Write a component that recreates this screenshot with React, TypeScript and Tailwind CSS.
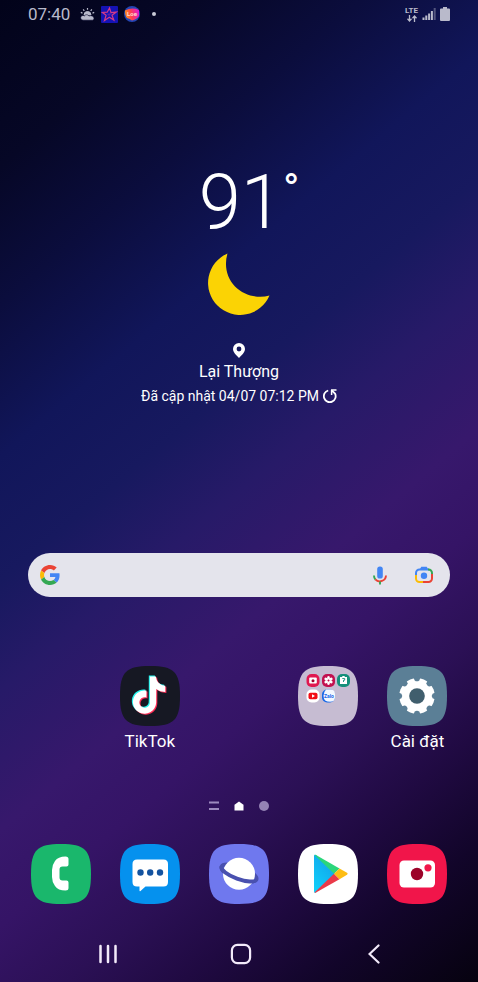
import type { ReactNode } from 'react'

const SQUIRCLE = 'M30 0C54 0 60 6 60 30S54 60 30 60 0 54 0 30 6 0 30 0Z'

const TIKTOK_NOTE =
  'M12.525.02c1.31-.02 2.61-.01 3.91-.02.08 1.53.63 3.09 1.75 4.17 1.12 1.11 2.7 1.62 4.24 1.79v4.03c-1.44-.05-2.89-.35-4.2-.97-.57-.26-1.1-.59-1.62-.93-.01 2.92.01 5.84-.02 8.75-.08 1.4-.54 2.79-1.35 3.94-1.31 1.92-3.58 3.17-5.91 3.21-1.43.08-2.86-.31-4.08-1.03-2.02-1.19-3.44-3.37-3.65-5.71-.02-.5-.03-1-.01-1.49.18-1.9 1.12-3.72 2.58-4.96 1.66-1.44 3.98-2.13 6.15-1.72.02 1.48-.04 2.96-.04 4.44-.99-.32-2.15-.23-3.02.37-.63.41-1.11 1.04-1.36 1.75-.21.51-.15 1.07-.14 1.61.24 1.64 1.82 3.02 3.5 2.87 1.12-.01 2.19-.66 2.77-1.61.19-.33.4-.67.41-1.06.1-1.79.06-3.57.07-5.36.01-4.03-.01-8.05.02-12.07z'

export default function App() {
  return (
    <div className="flex min-h-screen flex-col bg-[linear-gradient(140deg,#02031a_0%,#060726_12%,#0b0d3d_22%,#11165a_33%,#17195f_42%,#271a68_50%,#37186c_60%,#351466_67%,#2b1055_75%,#200a42_82%,#12052a_90%,#06020f_100%)] font-[Roboto,'Noto_Sans',sans-serif] text-white">
      <StatusBar />
      <main className="flex flex-col">
        <Weather />
        <SearchBar />
        <div className="mt-[69px] grid grid-cols-5 px-4">
          <AppButton name="TikTok" column="col-start-2" showLabel>
            <TikTokIcon />
          </AppButton>
          <AppButton name="Thư mục" column="col-start-4">
            <FolderIcon />
          </AppButton>
          <AppButton name="Cài đặt" column="col-start-5" showLabel>
            <SettingsIcon />
          </AppButton>
        </div>
        <PageIndicator />
        <div className="mt-[30px] grid grid-cols-5 px-4">
          <AppButton name="Điện thoại"><PhoneIcon /></AppButton>
          <AppButton name="Tin nhắn"><MessagesIcon /></AppButton>
          <AppButton name="Internet"><InternetIcon /></AppButton>
          <AppButton name="Play Store"><PlayIcon /></AppButton>
          <AppButton name="Máy ảnh"><CameraIcon /></AppButton>
        </div>
      </main>
      <NavBar />
    </div>
  )
}

function StatusBar() {
  return (
    <header className="flex h-7 items-center px-7 text-[#b9bacb]">
      <span className="text-[17px] leading-7">07:40</span>
      <svg className="ml-2.5" width="15" height="14" viewBox="0 0 15 14" fill="none" stroke="currentColor">
        <path d="M7.5 1v1.8M3.2 2.4l1.1 1.4M11.8 2.4l-1.1 1.4M.8 5.4l1.7.7M14.2 5.4l-1.7.7" strokeWidth="1.2" />
        <path d="M4 8a3.5 3.5 0 0 1 7 0z" fill="currentColor" strokeWidth="1" />
        <path d="M3 13.2a2.4 2.4 0 0 1 0-4.8c.6 0 1 .2 1.4.5.8-1.4 3.4-1.8 4.6.1 2-.9 5-.1 5 2.2 0 1.4-1 2-2 2z" fill="currentColor" stroke="#06072a" strokeWidth="0.6" />
      </svg>
      <svg className="ml-1.5" width="17" height="17" viewBox="0 0 17 17">
        <rect width="17" height="17" rx="1" fill="#1513b4" />
        <path d="M8.5 2l1.5 4.7 5.2-.6-4.2 3.1 1.8 4.8-4.5-2.7-4.8 3.2 1.6-5.3-3.6-2.7 4.7-.3z" fill="none" stroke="#d33a86" strokeWidth="1.2" />
        <path d="M6 8l5-1-3 3z" fill="#5b1fb0" />
      </svg>
      <svg className="ml-1.5" width="16" height="16" viewBox="0 0 16 16">
        <defs>
          <linearGradient id="live" x1="0" y1="0.6" x2="1" y2="0.4">
            <stop offset="0" stopColor="#ff9d12" />
            <stop offset="0.45" stopColor="#ff3e50" />
            <stop offset="1" stopColor="#e11bd0" />
          </linearGradient>
        </defs>
        <circle cx="8" cy="8" r="8" fill="#2445b4" />
        <path d="M1 4.5Q8 1 15 4v6Q13 13 8 14.5q-2-2-5-2.5-2-2-2-7.5z" fill="url(#live)" />
        <text x="8" y="10" textAnchor="middle" fontSize="6" fontWeight="700" fill="#ffd9c9">Loe</text>
      </svg>
      <span className="ml-3 size-1 rounded-full bg-[#c9cad6]" />
      <div className="ml-auto flex items-center gap-1">
        <div className="flex flex-col items-center">
          <span className="text-[8px] leading-[8px] font-bold">LTE</span>
          <svg width="10" height="7" viewBox="0 0 10 7" fill="none" stroke="currentColor" strokeWidth="1.3">
            <path d="M2.5 0v6M.5 3.8l2 2.2 2-2.2M7.5 7V1M5.5 3.2l2-2.2 2 2.2" />
          </svg>
        </div>
        <svg width="14" height="14" viewBox="0 0 14 14" fill="currentColor">
          <path d="M.5 10.5h2V13h-2zM3.3 8.5h2V13h-2zM6.1 6.5h2V13h-2zM8.9 4h2v9h-2z" />
          <path d="M11.7 1h2v12h-2z" opacity="0.4" />
        </svg>
        <svg width="10" height="14" viewBox="0 0 10 14" fill="currentColor">
          <path d="M3 0h4v1.5h2q1 0 1 1V13q0 1-1 1H1q-1 0-1-1V2.5q0-1 1-1h2z" />
        </svg>
      </div>
    </header>
  )
}

function Weather() {
  return (
    <section className="flex flex-col items-center pt-[132px]">
      <div className="flex items-start pl-5">
        <span className="text-[76px] leading-[84px] font-light">91</span>
        <span className="text-[44px] leading-[60px]">°</span>
      </div>
      <svg className="mt-2" width="62" height="63" viewBox="0 0 62 63">
        <path d="M19.5 1.5A32 32 0 1 0 61.5 43.5C50 47 36 43.5 27 34.5 18.5 26 16 13 19.5 1.5Z" fill="#fbd304" />
      </svg>
      <svg className="mt-7" width="12" height="15" viewBox="0 0 12 15">
        <path d="M6 0a6 6 0 0 0-6 6c0 3.5 3.8 6.5 6 9 2.2-2.5 6-5.5 6-9a6 6 0 0 0-6-6zm0 3.6a2.4 2.4 0 1 1 0 4.8 2.4 2.4 0 0 1 0-4.8z" fill="#fff" fillRule="evenodd" />
      </svg>
      <p className="mt-0.5 text-base leading-6">Lại Thượng</p>
      <button type="button" className="flex items-center gap-1 text-sm leading-6">
        Đã cập nhật 04/07 07:12 PM
        <svg width="14" height="14" viewBox="0 0 14 14" fill="none" stroke="currentColor" strokeWidth="1.8">
          <path d="M5.2 1.5A5.9 5.9 0 1 0 12 4.5L9 1.6" />
          <path d="M8 1h5.5M8.6 1v5" strokeWidth="1.5" />
        </svg>
      </button>
    </section>
  )
}

function SearchBar() {
  return (
    <form className="mx-7 mt-[145px] flex h-11 items-center rounded-full bg-[#e4e4ec] pr-1 pl-3">
      <svg className="shrink-0" width="20" height="20" viewBox="0 0 48 48">
        <path fill="#EA4335" d="M24 9.5c3.54 0 6.71 1.22 9.21 3.6l6.85-6.85C35.9 2.38 30.47 0 24 0 14.62 0 6.51 5.38 2.56 13.22l7.98 6.19C12.43 13.72 17.74 9.5 24 9.5z" />
        <path fill="#4285F4" d="M46.98 24.55c0-1.57-.15-3.09-.38-4.55H24v9.02h12.94c-.58 2.96-2.26 5.48-4.78 7.18l7.73 6c4.51-4.18 7.09-10.36 7.09-17.65z" />
        <path fill="#FBBC05" d="M10.53 28.59c-.48-1.45-.76-2.99-.76-4.59s.27-3.14.76-4.59l-7.98-6.19C.92 16.46 0 20.12 0 24c0 3.88.92 7.54 2.56 10.78l7.97-6.19z" />
        <path fill="#34A853" d="M24 48c6.48 0 11.93-2.13 15.89-5.81l-7.73-6c-2.15 1.45-4.92 2.3-8.16 2.3-6.26 0-11.57-4.22-13.47-9.91l-7.98 6.19C6.51 42.62 14.62 48 24 48z" />
      </svg>
      <input type="text" aria-label="Tìm kiếm" className="min-w-0 flex-1 bg-transparent px-3 text-base text-gray-800 outline-none" />
      <button type="button" aria-label="Tìm kiếm bằng giọng nói" className="flex size-11 items-center justify-center">
        <svg width="14" height="19" viewBox="0 0 14 19" fill="none" strokeWidth="1.9">
          <rect x="4.2" y="0.5" width="5.6" height="12" rx="2.6" fill="#4285F4" />
          <path d="M1 9.5a6 6 0 0 0 1.5 4.1" stroke="#34A853" />
          <path d="M2.3 13.4a6.2 6.2 0 0 0 10.7-3.9" stroke="#EA4335" />
          <path d="M7 15.6v3" stroke="#34A853" />
        </svg>
      </button>
      <button type="button" aria-label="Tìm kiếm bằng hình ảnh" className="flex size-11 items-center justify-center">
        <svg width="20" height="18" viewBox="0 0 20 18" fill="none" strokeWidth="2">
          <path d="M2 9V7a3.5 3.5 0 0 1 3.5-3.5H15" stroke="#4285F4" />
          <path d="M6 3L7.3.8h5.4L14 3z" fill="#4285F4" />
          <path d="M14 3.5h.5A3.5 3.5 0 0 1 18 7v1.5" stroke="#34A853" />
          <path d="M18 8v4.5a3.5 3.5 0 0 1-3.5 3.5H9" stroke="#EA4335" />
          <path d="M2 9v3.5A3.5 3.5 0 0 0 5.5 16H9" stroke="#FBBC05" />
          <circle cx="10" cy="9.8" r="3.2" fill="#4285F4" />
        </svg>
      </button>
    </form>
  )
}

function AppButton({
  name, column, showLabel, children,
}: {
  name: string; column?: string; showLabel?: boolean; children: ReactNode
}) {
  return (
    <button type="button" aria-label={name} className={`flex flex-col items-center gap-1 ${column ?? ''}`}>
      {children}
      {showLabel && <span className="text-[17px] leading-[22px] whitespace-nowrap">{name}</span>}
    </button>
  )
}

function AppIcon({ color, children }: { color: string; children: ReactNode }) {
  return (
    <svg width="60" height="60" viewBox="0 0 60 60">
      <path d={SQUIRCLE} fill={color} />
      {children}
    </svg>
  )
}

function TikTokIcon() {
  return (
    <AppIcon color="#161823">
      <path d={TIKTOK_NOTE} fill="#25f4ee" transform="translate(9.4 9.5) scale(1.55)" />
      <path d={TIKTOK_NOTE} fill="#fe2c55" transform="translate(11.6 11.5) scale(1.55)" />
      <path d={TIKTOK_NOTE} fill="#fff" transform="translate(10.5 10.5) scale(1.55)" />
    </AppIcon>
  )
}

function FolderIcon() {
  return (
    <AppIcon color="#c6bcd2">
      <rect x="8.5" y="8" width="13" height="13" rx="5" fill="#e01850" />
      <rect x="11.2" y="11.5" width="7.6" height="6" rx="1" fill="#fff" />
      <circle cx="15" cy="14.7" r="1.5" fill="#a0002d" />
      <rect x="24" y="8" width="13" height="13" rx="5" fill="#c2104f" />
      <g fill="#fff">
        {[0, 60, 120, 180, 240, 300].map((a) => (
          <ellipse key={a} cx="30.5" cy="11.9" rx="1.4" ry="2" transform={`rotate(${a} 30.5 14.5)`} />
        ))}
      </g>
      <circle cx="30.5" cy="14.5" r="0.9" fill="#c2104f" />
      <rect x="39" y="8" width="13" height="13" rx="5" fill="#14907a" />
      <path d="M42 11h2l.6-1h1.8l.6 1h2v7h-7z" fill="#fff" />
      <path d="M44.3 12.5h2.4v1.7h-1.2v1.8" fill="none" stroke="#14907a" strokeWidth="0.9" />
      <rect x="8.5" y="23.5" width="13" height="13" rx="5" fill="#fff" />
      <rect x="10.5" y="26.8" width="9" height="6.4" rx="1.8" fill="#f20d16" />
      <path d="M14 28.3l3 1.7-3 1.7z" fill="#fff" />
      <rect x="24" y="23.5" width="13" height="13" rx="5" fill="#1769e8" />
      <path d="M28 23.6h5q4 .4 4 4.6v3q0 4.5-5 4.5-3 0-4.5-1-2-1.7-2-5t2.5-6.1z" fill="#f4f8ff" />
      <text x="31" y="32" textAnchor="middle" fontSize="5" fontWeight="700" fill="#1769e8">Zalo</text>
    </AppIcon>
  )
}

function SettingsIcon() {
  return (
    <AppIcon color="#5b7f96">
      <circle cx="30" cy="30" r="17.8" fill="#fff" />
      {[0, 45, 90, 135, 180, 225, 270, 315].map((a) => (
        <path key={a} d="M26.3 11h7.4L32.3 14.4Q30 16.2 27.7 14.4z" fill="#5b7f96" transform={`rotate(${a} 30 30)`} />
      ))}
      <circle cx="30" cy="30" r="7.8" fill="#405e6d" />
    </AppIcon>
  )
}

function PhoneIcon() {
  return (
    <AppIcon color="#1ab76c">
      <path d="M34.5 12.5q3 0 3 2.5v5.5q0 2-2 2h-4q-3 0-3 3v8q0 3 3 3h4q2 0 2 2V44q0 2.5-3 2.5-7.5 0-10.5-4.5-3-4-3-9v-7q0-5 3-9 3-4.5 10.5-4.5z" fill="#fff" />
    </AppIcon>
  )
}

function MessagesIcon() {
  return (
    <AppIcon color="#0591ee">
      <path d="M17 15.5h26.5q4.5 0 4.5 4.5v18q0 4.5-4.5 4.5H25.5L20.5 47q-1 .7-1-.5v-4H17q-4.5 0-4.5-4.5V20q0-4.5 4.5-4.5z" fill="#fff" />
      <g fill="#1453a0">
        <circle cx="20.5" cy="28.5" r="3.2" />
        <circle cx="30.2" cy="28.5" r="3.2" />
        <circle cx="40" cy="28.5" r="3.2" />
      </g>
    </AppIcon>
  )
}

function InternetIcon() {
  return (
    <AppIcon color="#6f78ee">
      {/* the back of the ring sits behind the planet, the front half over it */}
      <ellipse cx="30" cy="29" rx="18.5" ry="6" fill="none" stroke="#4950af" strokeWidth="4" transform="rotate(20 30 29)" />
      <circle cx="30" cy="29.8" r="16" fill="#fff" />
      <path d="M11.5 29a18.5 6 0 0 0 37 0" fill="none" stroke="#4950af" strokeWidth="4" transform="rotate(20 30 29)" />
    </AppIcon>
  )
}

function PlayIcon() {
  return (
    <AppIcon color="#fff">
      <defs>
        <linearGradient id="play-blue" x1="0" y1="1" x2="0.6" y2="0">
          <stop offset="0" stopColor="#10d3fb" />
          <stop offset="1" stopColor="#12a4ea" />
        </linearGradient>
      </defs>
      <path d="M16 12q0-2 2-1L37 29.8 18 48.5q-2 1-2-1z" fill="url(#play-blue)" />
      <path d="M16.5 11q.5-.5 1.5 0L41.5 24.5 36 29.8z" fill="#2bd67b" />
      <path d="M16.5 48.5q.5.5 1.5 0L41.5 35.3 36 29.8z" fill="#ea3a49" />
      <path d="M41.5 24.5l7.5 4.3q1.5 1 0 2l-7.5 4.5L36 29.8z" fill="#fdbd14" />
    </AppIcon>
  )
}

function CameraIcon() {
  return (
    <AppIcon color="#f1154a">
      <rect x="12.5" y="16.5" width="35.5" height="27" rx="4.5" fill="#fff" />
      <circle cx="30" cy="30" r="6.2" fill="#9c0329" />
      <circle cx="41" cy="23.8" r="3.6" fill="#f1154a" />
    </AppIcon>
  )
}

function PageIndicator() {
  return (
    <div className="mt-[46px] flex h-4 items-center justify-center gap-[15px]">
      <svg width="10" height="10" viewBox="0 0 10 10" fill="#9d8abf">
        <path d="M0 .5h10v2H0zM0 7h10v2H0z" />
      </svg>
      <svg width="10" height="10" viewBox="0 0 10 10">
        <path d="M5 .5l4.5 3.3V9.5H.5V3.8z" fill="#fff" />
      </svg>
      <span className="size-2.5 rounded-full bg-[#9583b5]" />
    </div>
  )
}

function NavBar() {
  return (
    <nav className="mt-auto mb-2.5 grid h-9 grid-cols-3 items-center pr-[38px] pl-[42px]">
      <button type="button" aria-label="Gần đây" className="flex justify-center">
        <svg width="20" height="20" viewBox="0 0 20 20" stroke="#f3eafa" strokeWidth="2.5" strokeLinecap="round">
          <path d="M2.5 2v16M10 2v16M17.5 2v16" />
        </svg>
      </button>
      <button type="button" aria-label="Màn hình chính" className="flex justify-center">
        <svg width="22" height="22" viewBox="0 0 22 22" fill="none" stroke="#f3eafa" strokeWidth="2.2">
          <rect x="1.9" y="1.9" width="18.2" height="18.2" rx="5.5" />
        </svg>
      </button>
      <button type="button" aria-label="Quay lại" className="flex justify-center">
        <svg width="12" height="20" viewBox="0 0 12 20" fill="none" stroke="#f3eafa" strokeWidth="2.2" strokeLinecap="round">
          <path d="M10.5 1.5L1.5 10l9 8.5" />
        </svg>
      </button>
    </nav>
  )
}
